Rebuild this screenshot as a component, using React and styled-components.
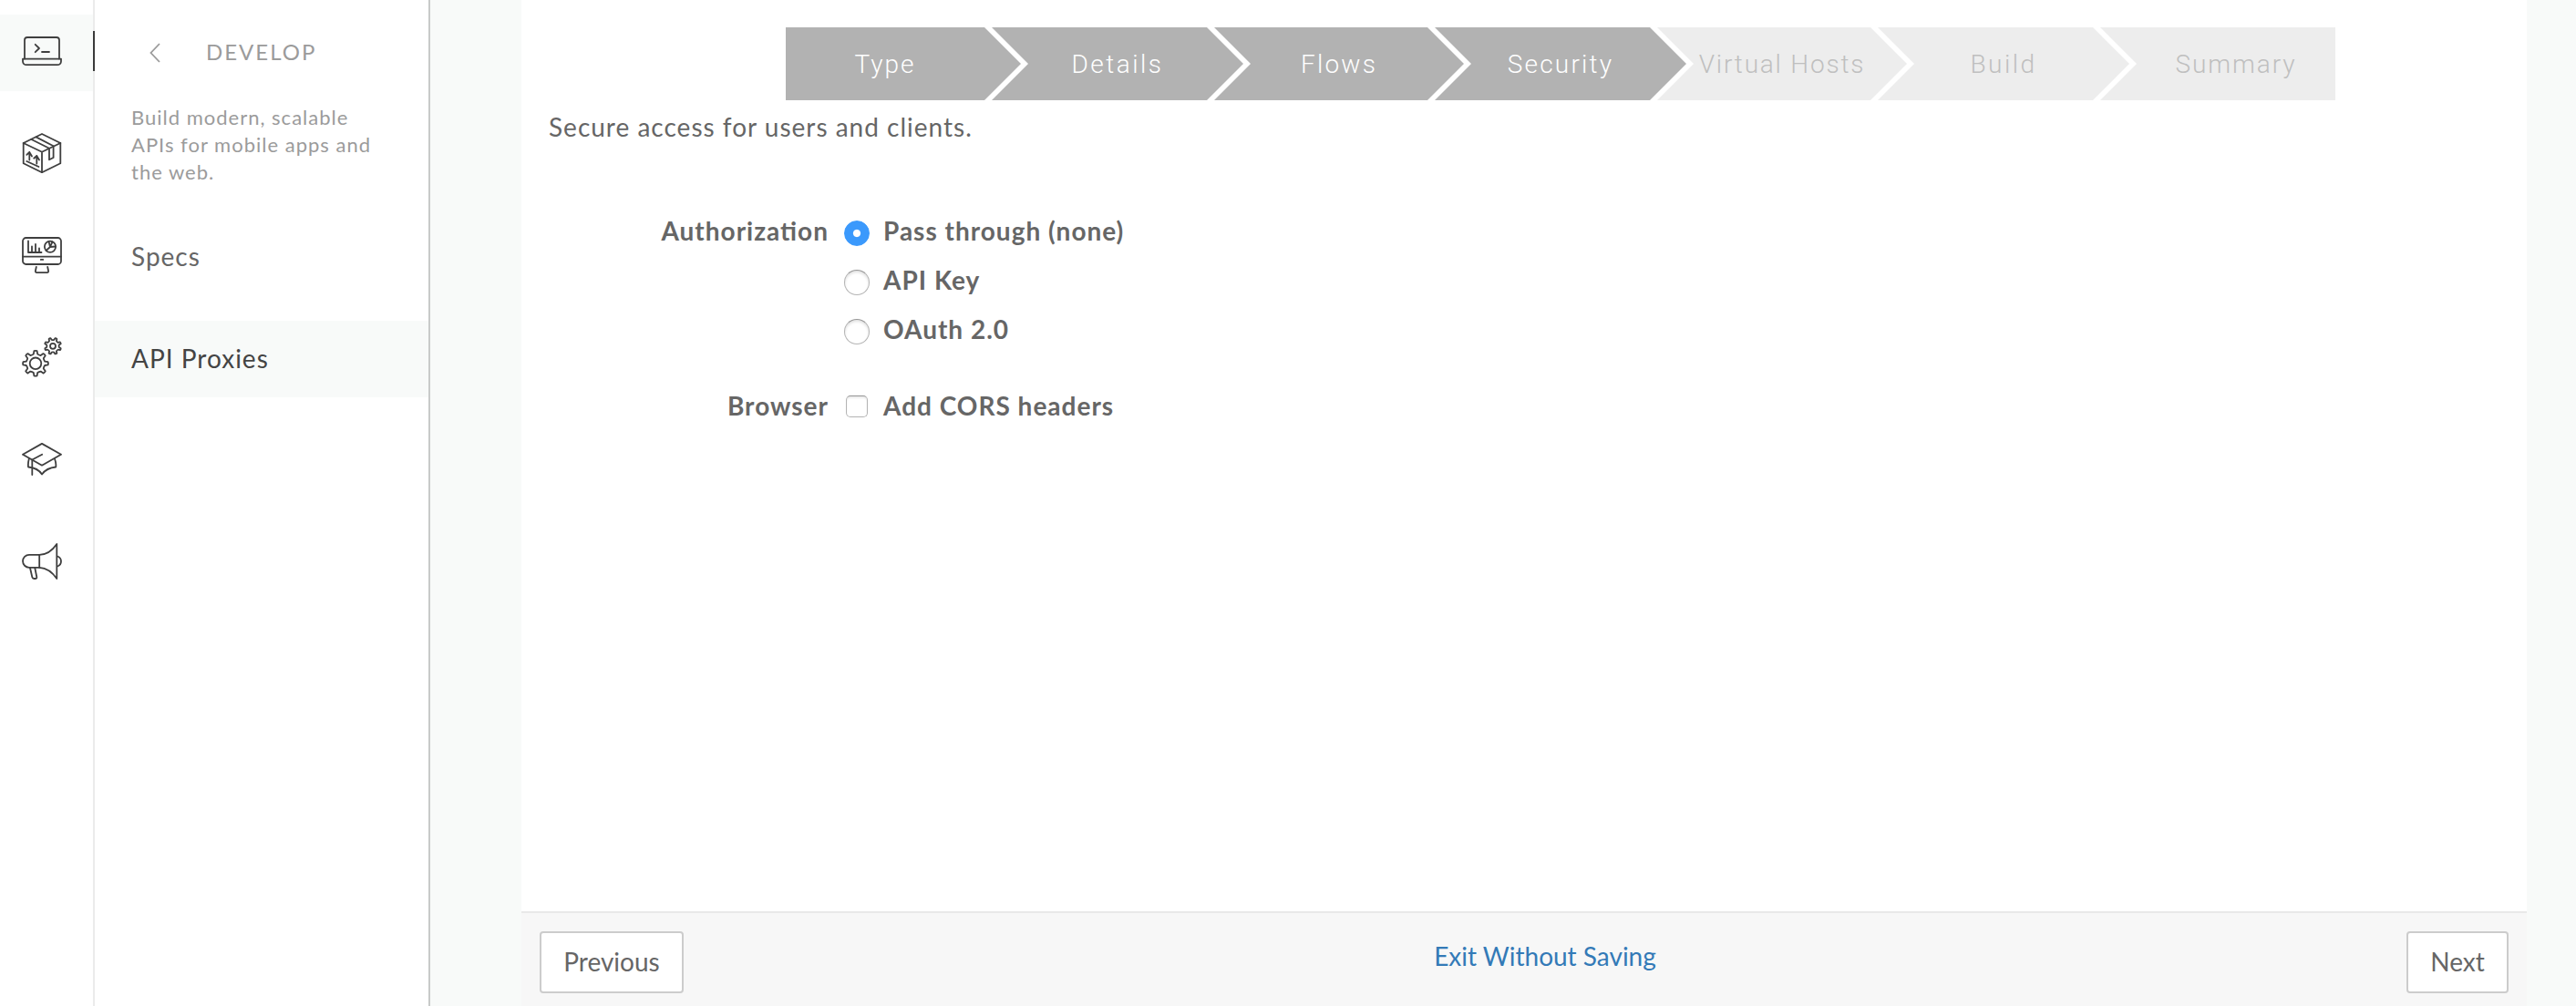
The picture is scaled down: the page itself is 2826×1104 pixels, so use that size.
import React from "react";
import styled, { createGlobalStyle, css } from "styled-components";

const GlobalStyle = createGlobalStyle`
  *, *::before, *::after { box-sizing: border-box; }
  body {
    margin: 0;
    background: #f8faf9;
    color: #666;
    font-family: Lato, "Open Sans", sans-serif;
    font-size: 28px;
    letter-spacing: 1px;
    font-feature-settings: "liga" 1;
  }
  h2, p { margin: 0; font-weight: 400; }
`;

const Page = styled.div`
  display: flex;
  width: 2826px;
  height: 1104px;
  overflow: hidden;
`;

/* ---------- icon rail ---------- */

const Rail = styled.nav`
  display: flex;
  flex-direction: column;
  gap: 28px;
  width: 104px;
  padding-top: 16px;
  background: #fff;
  border-right: 2px solid #ebebeb;
`;

const RailItem = styled.a`
  position: relative;
  display: flex;
  padding: 18px 24px 22px;
  width: 102px;
  height: 84px;
  color: #3f3f3f;
  background: ${(p) => (p.$active ? "#f8faf9" : "transparent")};

  ${(p) =>
    p.$active &&
    css`
      &::after {
        content: "";
        position: absolute;
        top: 18px;
        right: -2px;
        width: 2px;
        height: 44px;
        background: #3a3a3a;
      }
    `}
`;

const Icon = styled.svg`
  width: 44px;
  height: 44px;
  flex: none;
  fill: none;
  stroke: currentColor;
  stroke-width: 1.8;
  stroke-linecap: round;
  stroke-linejoin: round;
`;

const BackIcon = styled(Icon)`
  width: 12px;
  height: 22px;
  margin-top: 2px;
  stroke-linecap: butt;
  stroke-linejoin: miter;
`;

const LaptopIcon = () => (
  <Icon viewBox="0 0 44 44">
    <path d="M3 30.5V10a3 3 0 0 1 3-3h32a3 3 0 0 1 3 3v20.5" />
    <path d="M1 30.6h42v2.6a4 4 0 0 1-4 4H5a4 4 0 0 1-4-4z" />
    <path d="M14.7 14.8l4.3 4.2-4.3 4.2M22 23h8" />
  </Icon>
);

const BoxIcon = () => (
  <Icon viewBox="0 0 44 44">
    <path d="M22 1l20.3 10v22.3L22 43.2 1.7 33.3V11z" />
    <path d="M1.7 11L22 20.8 42.3 11M22 20.8v22.4" />
    <path d="M10.5 7L30 16.7V29.3l4.6-2.3V14.3L15.6 4.4" />
    <path d="M8.3 21v8.5M5.3 23.8l3-2.8 2.7 4.5M16.3 25v8.5M13.2 27.7l3.1-2.7 2.7 4.5M5.3 31l13.2 6" />
  </Icon>
);

const MonitorIcon = () => (
  <Icon viewBox="0 0 44 44">
    <rect x="1" y="3" width="42" height="29" rx="3.5" />
    <path d="M1 23.6h42M20.8 26.9h2.400" />
    <path d="M7 6.5v12.5h14.5M11 18.5v-6M15 18.5v-8.5M19 18.5v-4" />
    <circle cx="31" cy="12.7" r="6.1" />
    <path d="M29.5 7l1.5 6 6-.5M31 13l-4.500 4M33.5 7.500l-2.5 5" />
    <path d="M15.8 35l-.9 4.2q-.3 1.900 1.6 1.900h11q1.900 0 1.600-1.900l-.9-4.200" />
  </Icon>
);

function gearPath(cx, cy, outer, inner, teeth, offset) {
  const step = 360 / teeth;
  const at = (r, deg) => {
    const a = (deg * Math.PI) / 180;
    return `${(cx + r * Math.cos(a)).toFixed(2)} ${(cy + r * Math.sin(a)).toFixed(2)}`;
  };
  let d = "";
  for (let i = 0; i < teeth; i++) {
    const a = offset + i * step;
    d += `${i ? "L" : "M"}${at(inner, a - step * 0.27)}L${at(outer, a - step * 0.15)}`;
    d += `Q${at(outer + 0.5, a)} ${at(outer, a + step * 0.15)}L${at(inner, a + step * 0.27)}`;
    d += `Q${at(inner - 0.6, a + step / 2)} ${at(inner, a + step * 0.73)}`;
  }
  return d + "Z";
}

const GearsIcon = () => (
  <Icon viewBox="0 0 44 44">
    <path d={gearPath(15, 28.8, 13.7, 10.4, 8, 0)} />
    <circle cx="15" cy="28.8" r="6.3" />
    <path d={gearPath(34, 9.8, 9, 6.9, 8, 22.5)} />
    <circle cx="34" cy="9.8" r="3" />
  </Icon>
);

const CapIcon = () => (
  <Icon viewBox="0 0 44 44">
    <path d="M22 4.9l21 11.9-21 11.9L1 16.8z" />
    <path d="M22.2 16.8L11.3 22.5V39" />
    <path d="M7.8 21.5Q6.6 26 7 30.5 17.5 31.5 22 38.5 27 31.5 37.3 30.5 37.7 26 36 21.5" />
  </Icon>
);

const MegaphoneIcon = () => (
  <Icon viewBox="0 0 44 44">
    <path d="M19.2 14.8H8a7 7 0 0 0 0 14h11.2M19.2 14.8v14" />
    <path d="M19.2 14.8Q30.5 14.5 38.3 2.9V41Q30.5 29.5 19.2 28.8" />
    <path d="M39 16.5q4 1.5 4 5.5t-4 5.5" />
    <path d="M9 29.3l2.3 10q.4 1.7 2 1.7h1.4q1.8 0 1.6-1.7L14.3 29.3" />
  </Icon>
);

/* ---------- section menu ---------- */

const Sidebar = styled.aside`
  display: flex;
  flex-direction: column;
  width: 368px;
  background: #fff;
  border-right: 2px solid #c8cac9;
`;

const SidebarHeader = styled.header`
  display: flex;
  align-items: center;
  height: 114px;
  padding-left: 60px;
  color: #9b9b9b;
`;

const SidebarTitle = styled.h2`
  margin-left: 50px;
  font-size: 24px;
  line-height: 30px;
  letter-spacing: 2px;
`;

const SidebarText = styled.p`
  width: 290px;
  margin: 0 0 36px 40px;
  color: #9b9b9b;
  font-size: 22px;
  line-height: 30px;
`;

const MenuLink = styled.a`
  display: block;
  height: 84px;
  margin-bottom: 28px;
  padding-left: 40px;
  line-height: 82px;
  color: ${(p) => (p.$active ? "#444" : "#666")};
  background: ${(p) => (p.$active ? "#f8faf9" : "transparent")};
`;

/* ---------- wizard ---------- */

const Wizard = styled.main`
  display: flex;
  flex-direction: column;
  width: 2200px;
  margin-left: 100px;
  background: #fff;
`;

const Steps = styled.ol`
  display: flex;
  margin: 30px 0 0 290px;
  padding: 0;
  list-style: none;
`;

const Step = styled.li`
  flex: none;
  width: ${(p) => p.$width}px;
  height: 80px;
  padding: 0 40px;
  text-align: center;
  font-family: Roboto, "Liberation Sans", sans-serif;
  font-weight: 300;
  line-height: 81px;
  letter-spacing: ${(p) => p.$spacing}px;
  white-space: nowrap;
  color: ${(p) => (p.$done ? "#fff" : "#bfbfbf")};
  background: ${(p) => (p.$done ? "#b2b2b2" : "#ededed")};
  clip-path: polygon(0 0, calc(100% - 40px) 0, 100% 50%, calc(100% - 40px) 100%, 0 100%, 40px 50%);

  & + & {
    margin-left: -32px;
  }
  &:first-child {
    padding-left: 0;
    clip-path: polygon(0 0, calc(100% - 40px) 0, 100% 50%, calc(100% - 40px) 100%, 0 100%);
  }
  &:last-child {
    padding-right: 0;
    clip-path: polygon(0 0, 100% 0, 100% 100%, 0 100%, 40px 50%);
  }
`;

const Intro = styled.p`
  margin: 9px 0 0 30px;
  line-height: 40px;
`;

const Form = styled.form`
  display: grid;
  grid-template-columns: 307px auto;
  column-gap: 17px;
  row-gap: 30px;
  justify-content: start;
  margin: 67px 0 0 30px;
  font-weight: 700;
  line-height: 54px;
`;

const FieldLabel = styled.div`
  text-align: right;
`;

const Options = styled.div`
  display: flex;
  flex-direction: column;
`;

const Option = styled.label`
  display: flex;
  align-items: center;
  gap: 15px;
  height: 54px;
`;

const Radio = styled.input.attrs({ type: "radio" })`
  appearance: none;
  flex: none;
  width: 28px;
  height: 28px;
  margin: 6px 0 0;
  border: 1px solid #b4b4b4;
  border-top-color: #959595;
  border-radius: 50%;
  background: #fff;
  box-shadow: inset 0 2px 3px rgba(0, 0, 0, 0.12);

  &:checked {
    border-color: #3b99fc;
    background: radial-gradient(circle at 50% 50%, #fff 3.6px, #3b99fc 4.6px);
    box-shadow: none;
  }
`;

const Checkbox = styled.input.attrs({ type: "checkbox" })`
  appearance: none;
  flex: none;
  width: 24px;
  height: 24px;
  margin: 2px 2px 0;
  border: 1px solid #b4b4b4;
  border-top-color: #959595;
  border-radius: 5px;
  background: #fff;
  box-shadow: inset 0 2px 2px rgba(0, 0, 0, 0.08);
`;

const Footer = styled.footer`
  display: flex;
  align-items: flex-start;
  justify-content: space-between;
  height: 104px;
  margin-top: auto;
  padding: 20px 20px 0;
  background: #f7f7f7;
  border-top: 2px solid #e9e9e9;
  letter-spacing: 0;
`;

const Button = styled.button`
  width: ${(p) => p.$width}px;
  height: 68px;
  padding: 0 0 2px;
  border: 2px solid #ccc;
  border-radius: 4px;
  background: #fff;
  color: #666;
  font: inherit;
`;

const ExitLink = styled.a`
  margin-top: 7px;
  line-height: 40px;
  color: #337ab7;
`;

const railIcons = [LaptopIcon, BoxIcon, MonitorIcon, GearsIcon, CapIcon, MegaphoneIcon];

const steps = [
  { name: "Type", width: 258, spacing: 2, done: true },
  { name: "Details", width: 276, spacing: 2.5, done: true },
  { name: "Flows", width: 274, spacing: 2.2, done: true },
  { name: "Security", width: 276, spacing: 2.2, done: true },
  { name: "Virtual Hosts", width: 274, spacing: 1.8, done: false },
  { name: "Build", width: 276, spacing: 2.5, done: false },
  { name: "Summary", width: 258, spacing: 1.9, done: false },
];

export default function App() {
  return (
    <>
      <GlobalStyle />
      <Page>
        <Rail>
          {railIcons.map((Glyph, i) => (
            <RailItem key={i} $active={i === 0}>
              <Glyph />
            </RailItem>
          ))}
        </Rail>
        <Sidebar>
          <SidebarHeader>
            <BackIcon viewBox="0 0 12 22">
              <path d="M11 1L1.500 11l9.500 10" />
            </BackIcon>
            <SidebarTitle>DEVELOP</SidebarTitle>
          </SidebarHeader>
          <SidebarText>Build modern, scalable APIs for mobile apps and the web.</SidebarText>
          <MenuLink>Specs</MenuLink>
          <MenuLink $active>API Proxies</MenuLink>
        </Sidebar>
        <Wizard>
          <Steps>
            {steps.map((s) => (
              <Step key={s.name} $width={s.width} $spacing={s.spacing} $done={s.done}>
                {s.name}
              </Step>
            ))}
          </Steps>
          <Intro>Secure access for users and clients.</Intro>
          <Form>
            <FieldLabel>Authorization</FieldLabel>
            <Options>
              <Option>
                <Radio name="auth" defaultChecked />
                Pass through (none)
              </Option>
              <Option>
                <Radio name="auth" />
                API Key
              </Option>
              <Option>
                <Radio name="auth" />
                OAuth 2.0
              </Option>
            </Options>
            <FieldLabel>Browser</FieldLabel>
            <Options>
              <Option>
                <Checkbox />
                Add CORS headers
              </Option>
            </Options>
          </Form>
          <Footer>
            <Button $width={158}>Previous</Button>
            <ExitLink>Exit Without Saving</ExitLink>
            <Button $width={112}>Next</Button>
          </Footer>
        </Wizard>
      </Page>
    </>
  );
}
